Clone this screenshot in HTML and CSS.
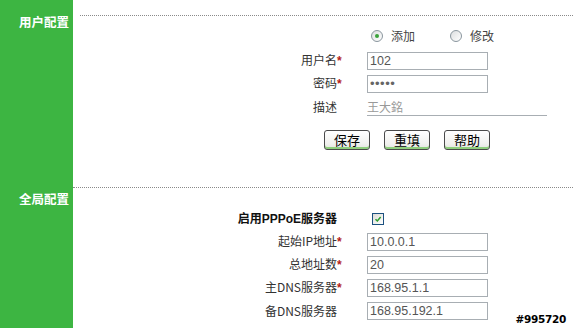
FILE: index.html
```html
<!DOCTYPE html>
<html lang="zh">
<head>
<meta charset="utf-8">
<title>PPPoE</title>
<link rel="stylesheet" href="styles.css">
</head>
<body>
<div class="page">
  <section class="section first">
    <div class="side"><span class="side-title t1">用户配置</span></div>
    <div class="main">
      <div class="rule rule1"></div>
      <div class="row radio-row">
        <div class="lbl"></div>
        <div class="opts">
          <span class="opt"><span class="radio on"></span>添加</span>
          <span class="opt"><span class="radio"></span>修改</span>
        </div>
      </div>
      <div class="row">
        <div class="lbl">用户名<span class="req">*</span></div>
        <input class="field" type="text" value="102">
      </div>
      <div class="row">
        <div class="lbl">密码<span class="req">*</span></div>
        <input class="field pw" type="password" value="12345">
      </div>
      <div class="row">
        <div class="lbl">描述<span class="req"></span></div>
        <input class="field line" type="text" value="王大銘">
      </div>
      <div class="buttons">
        <button class="btn">保存</button>
        <button class="btn">重填</button>
        <button class="btn">帮助</button>
      </div>
    </div>
  </section>
  <section class="section second">
    <div class="side"><span class="side-title t2">全局配置</span></div>
    <div class="main">
      <div class="rule"></div>
      <div class="row enable-row">
        <div class="lbl strong">启用PPPoE服务器<span class="req"></span></div>
        <div><span class="check"><svg viewBox="0 0 12 12" width="12" height="12"><path d="M3 6.2 L5.2 8.4 L9.2 3.6" fill="none" stroke="#2f9e2f" stroke-width="1.8"/></svg></span></div>
      </div>
      <div class="row">
        <div class="lbl">起始IP地址<span class="req">*</span></div>
        <input class="field" type="text" value="10.0.0.1">
      </div>
      <div class="row">
        <div class="lbl">总地址数<span class="req">*</span></div>
        <input class="field" type="text" value="20">
      </div>
      <div class="row">
        <div class="lbl">主DNS服务器<span class="req">*</span></div>
        <input class="field" type="text" value="168.95.1.1">
      </div>
      <div class="row">
        <div class="lbl">备DNS服务器<span class="req"></span></div>
        <input class="field" type="text" value="168.95.192.1">
      </div>
    </div>
  </section>
  <div class="watermark">#995720</div>
</div>
</body>
</html>
```

FILE: styles.css
```css
* { box-sizing: border-box; }
html, body { margin: 0; padding: 0; background: #fff; }
body {
  font-family: "Liberation Sans", "Noto Sans CJK SC", sans-serif;
  font-size: 12px;
  color: #333;
}
.page {
  position: relative;
  min-height: 100vh;
  display: flex;
  flex-direction: column;
  overflow: hidden;
}
.section {
  display: grid;
  grid-template-columns: 73px 1fr;
}
.second { flex: 1; }
.side {
  background: #3db542;
  text-align: right;
  padding-right: 4px;
}
.side-title {
  display: block;
  color: #fff;
  font-weight: bold;
  font-size: 12.5px;
  line-height: 16px;
  font-family: "Noto Sans CJK SC", sans-serif;
}
.t1 { padding-top: 14px; }
.t2 { padding-top: 4px; }
.main { display: flex; flex-direction: column; }
.first .main { padding-top: 15px; padding-bottom: 37px; }
.rule {
  border-top: 1px dotted #8a8a8a;
  height: 0;
}
.rule1 { margin-left: 7px; }
.row {
  display: grid;
  grid-template-columns: 272px 1fr;
  column-gap: 22px;
  height: 23px;
  align-items: center;
}
.radio-row { margin-top: 8px; margin-bottom: 2px; }
.enable-row { margin-top: 19px; }
.lbl {
  text-align: right;
  white-space: nowrap;
  color: #333;
  font-family: "Noto Sans CJK SC", sans-serif;
  line-height: 16px;
}
.lbl.strong {
  font-weight: bold;
  color: #111;
  font-family: "Liberation Sans", "Noto Sans CJK SC", sans-serif;
}
.req {
  display: inline-block;
  width: 8px;
  text-align: left;
  color: #b51d1d;
  font-weight: bold;
  font-family: "Liberation Sans", sans-serif;
}
.field {
  width: 121px;
  height: 18px;
  border: 1px solid #a8aeb3;
  padding: 0 2px;
  font-family: "Liberation Sans", "Noto Sans CJK SC", sans-serif;
  font-size: 12.5px;
  color: #555;
  background: #fff;
  outline: none;
}
.field.pw { color: #666; font-size: 13px; letter-spacing: 0.5px; }
.field.line {
  width: 180px;
  border: none;
  border-bottom: 1px solid #a8aeb3;
  padding: 0;
  color: #999;
  font-family: "Noto Sans CJK SC", sans-serif;
  font-size: 12px;
}
.opts {
  display: flex;
  align-items: center;
  padding-left: 4px;
  font-family: "Noto Sans CJK SC", sans-serif;
  color: #444;
}
.opt { display: inline-flex; align-items: center; gap: 8px; }
.opt + .opt { margin-left: 35px; }
.radio {
  width: 12px;
  height: 12px;
  border-radius: 50%;
  border: 1px solid #8a969e;
  background: linear-gradient(135deg, #dcdedf, #fff);
  display: inline-flex;
  align-items: center;
  justify-content: center;
}
.radio.on::after {
  content: "";
  width: 4px;
  height: 4px;
  border-radius: 50%;
  background: #3aa23a;
}
.check {
  display: inline-flex;
  width: 12px;
  height: 12px;
  margin-left: 5px;
  border: 1px solid #1c5180;
  background: linear-gradient(135deg, #dcdcd7, #fff);
  align-items: center;
  justify-content: center;
  vertical-align: middle;
}
.check svg { display: block; }
.buttons {
  display: flex;
  gap: 14px;
  margin-top: 12px;
  padding-left: 251px;
}
.btn {
  width: 46px;
  height: 20px;
  padding: 0;
  border: 1px solid #4a4a4a;
  border-radius: 3px;
  background: linear-gradient(#ffffff, #f1f1ee 70%, #e4e4e0);
  box-shadow: inset 0 -2px 0 #8fcf7d;
  font-family: "Noto Sans CJK SC", sans-serif;
  font-size: 13px;
  line-height: 16px;
  color: #000;
}
.watermark {
  position: absolute;
  right: 7px;
  bottom: 3px;
  font-family: "DejaVu Sans", sans-serif;
  font-weight: bold;
  font-size: 10.5px;
  color: #000;
  letter-spacing: -0.3px;
  text-shadow: 1px 0 0 #fff, -1px 0 0 #fff, 0 1px 0 #fff, 0 -1px 0 #fff, 1px 1px 0 #fff, -1px -1px 0 #fff, 1px -1px 0 #fff, -1px 1px 0 #fff;
}
```
